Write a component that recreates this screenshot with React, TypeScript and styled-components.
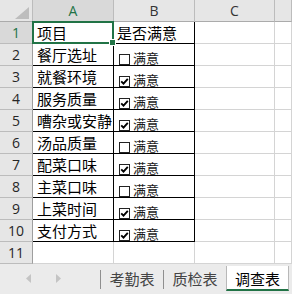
import styled, { createGlobalStyle } from "styled-components";

const GlobalStyle = createGlobalStyle`
  body {
    margin: 0;
    background: #ffffff;
  }
  * {
    box-sizing: border-box;
  }
`;

const Wrapper = styled.div`
  width: 292px;
  height: 294px;
  overflow: hidden;
  display: flex;
  flex-direction: column;
  background: #ffffff;
`;

const Sheet = styled.div`
  display: grid;
  grid-template-columns: 33px 81px 81px 80px 1fr;
  grid-auto-rows: 22px;
`;

const Corner = styled.div`
  background: #e6e6e6;
  border-right: 1px solid #bcbcbc;
  border-bottom: 1px solid #ababab;
  display: flex;
  align-items: flex-end;
  justify-content: flex-end;
  padding: 0 3px 2px 0;
`;

const ColHead = styled.div<{ $active?: boolean }>`
  background: ${(p) => (p.$active ? "#d9d9d9" : "#e6e6e6")};
  border-right: 1px solid #bcbcbc;
  border-bottom: 1px solid #ababab;
  display: flex;
  align-items: center;
  justify-content: center;
  font-family: "Open Sans", "Liberation Sans", sans-serif;
  font-size: 14px;
  color: ${(p) => (p.$active ? "#217346" : "#333333")};
`;

const RowHead = styled.div<{ $active?: boolean }>`
  background: ${(p) => (p.$active ? "#d9d9d9" : "#e6e6e6")};
  border-right: 1px solid #9e9e9e;
  border-bottom: 1px solid #bcbcbc;
  display: flex;
  align-items: center;
  justify-content: center;
  font-family: "Open Sans", "Liberation Sans", sans-serif;
  font-size: 14px;
  color: ${(p) => (p.$active ? "#217346" : "#262626")};
`;

const Cell = styled.div<{ $framed?: boolean; $selected?: boolean }>`
  position: relative;
  z-index: ${(p) => (p.$selected ? 1 : 0)};
  border-right: 1px solid ${(p) => (p.$framed ? "#000000" : "#d4d4d4")};
  border-bottom: 1px solid ${(p) => (p.$framed ? "#000000" : "#d4d4d4")};
  display: flex;
  align-items: center;
  padding-left: 4px;
  font-family: "Noto Sans CJK SC", "Noto Sans", sans-serif;
  font-size: 15px;
  color: #000000;
  white-space: nowrap;
`;

const CheckCell = styled(Cell)`
  align-items: flex-end;
  padding-left: 5px;
  gap: 3px;
`;

const CheckLabel = styled.span`
  font-size: 13px;
  line-height: 15px;
  color: #1a1a1a;
`;

const Selection = styled.div`
  position: absolute;
  inset: -1px;
  border: 2px solid #217346;
  pointer-events: none;
`;

const FillHandle = styled.div`
  position: absolute;
  right: -4px;
  bottom: -4px;
  width: 7px;
  height: 7px;
  background: #217346;
  border: 1px solid #ffffff;
`;

const TabBar = styled.div`
  height: 30px;
  background: #ebebeb;
  display: flex;
  align-items: flex-start;
  padding-top: 2px;
`;

const Nav = styled.div`
  width: 100px;
  height: 25px;
  display: flex;
  align-items: center;
  padding-left: 26px;
  gap: 23px;
`;

const Separator = styled.div`
  width: 1px;
  height: 19px;
  margin-top: 4px;
  background: #8f8f8f;
`;

const Tab = styled.div<{ $active?: boolean }>`
  width: ${(p) => (p.$active ? "63px" : "62px")};
  height: 25px;
  display: flex;
  align-items: center;
  justify-content: center;
  font-family: "Noto Sans CJK SC", "Noto Sans", sans-serif;
  font-size: 15px;
  color: ${(p) => (p.$active ? "#000000" : "#444444")};
  background: ${(p) => (p.$active ? "#ffffff" : "transparent")};
  border-left: ${(p) => (p.$active ? "1px solid #b8b8b8" : "none")};
  border-right: ${(p) => (p.$active ? "1px solid #b8b8b8" : "none")};
  border-bottom: ${(p) => (p.$active ? "2px solid #217346" : "none")};
  padding-top: ${(p) => (p.$active ? "2px" : "0")};
`;

const Box = ({ checked }: { checked: boolean }) => (
  <svg width="11" height="11" viewBox="0 0 11 11" style={{ flex: "none" }}>
    <rect x="0.5" y="0.5" width="10" height="10" fill="#fff" stroke="#222" />
    {checked && (
      <polyline
        points="2.2,5.3 4.5,7.6 8.8,2.8"
        fill="none"
        stroke="#000"
        strokeWidth="1.9"
      />
    )}
  </svg>
);

const Arrow = ({ dir }: { dir: "left" | "right" }) => (
  <svg width="6" height="9" viewBox="0 0 6 9">
    <polygon
      points={dir === "left" ? "5,0 0,4.5 5,9" : "1,0 6,4.5 1,9"}
      fill="#c4c4c4"
    />
  </svg>
);

const rows: { item: string; ok: boolean }[] = [
  { item: "餐厅选址", ok: false },
  { item: "就餐环境", ok: true },
  { item: "服务质量", ok: true },
  { item: "嘈杂或安静", ok: true },
  { item: "汤品质量", ok: false },
  { item: "配菜口味", ok: true },
  { item: "主菜口味", ok: false },
  { item: "上菜时间", ok: true },
  { item: "支付方式", ok: true },
];

export default function App() {
  return (
    <Wrapper>
      <GlobalStyle />
      <Sheet>
        <Corner>
          <svg width="14" height="12" viewBox="0 0 14 12">
            <polygon points="14,0 14,12 0,12" fill="#bdbdbd" />
          </svg>
        </Corner>
        <ColHead $active>A</ColHead>
        <ColHead>B</ColHead>
        <ColHead>C</ColHead>
        <ColHead />

        <RowHead $active>1</RowHead>
        <Cell $framed $selected>
          项目
          <Selection>
            <FillHandle />
          </Selection>
        </Cell>
        <Cell $framed style={{ paddingLeft: 3 }}>是否满意</Cell>
        <Cell />
        <Cell />

        {rows.map((r, i) => (
          <RowLine key={r.item} n={i + 2} item={r.item} ok={r.ok} />
        ))}

        <RowHead>11</RowHead>
        <Cell />
        <Cell />
        <Cell />
        <Cell />
      </Sheet>
      <TabBar>
        <Nav>
          <Arrow dir="left" />
          <Arrow dir="right" />
        </Nav>
        <Separator />
        <Tab>考勤表</Tab>
        <Separator />
        <Tab>质检表</Tab>
        <Tab $active>调查表</Tab>
      </TabBar>
    </Wrapper>
  );
}

function RowLine({ n, item, ok }: { n: number; item: string; ok: boolean }) {
  return (
    <>
      <RowHead>{n}</RowHead>
      <Cell $framed>{item}</Cell>
      <CheckCell $framed>
        <Box checked={ok} />
        <CheckLabel>满意</CheckLabel>
      </CheckCell>
      <Cell />
      <Cell />
    </>
  );
}
